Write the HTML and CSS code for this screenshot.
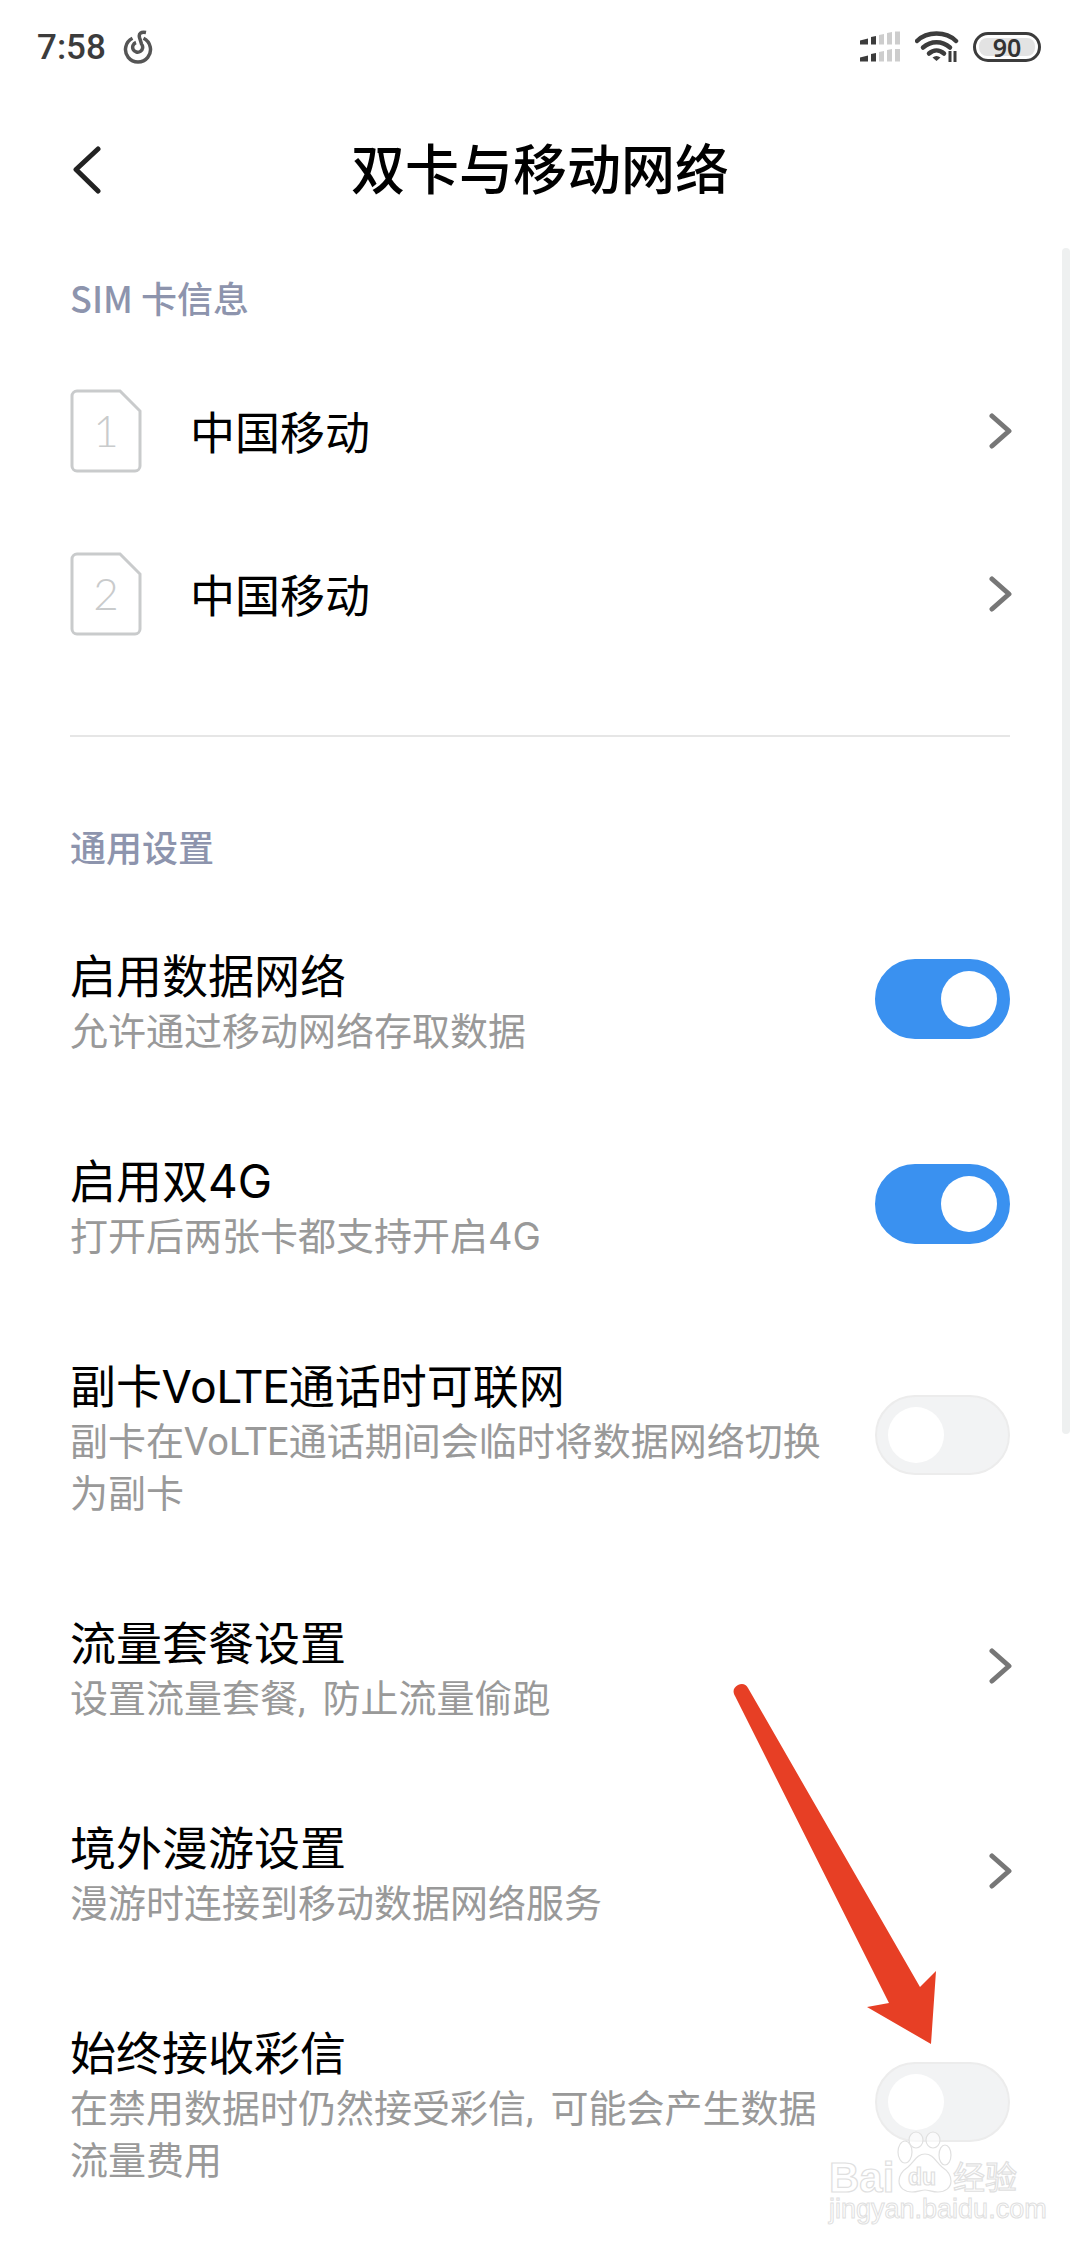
FILE: index.html
```html
<!DOCTYPE html>
<html lang="zh-CN">
<head>
    <meta charset="UTF-8">
    <meta name="viewport" content="width=device-width, initial-scale=1.0">
    <title>双卡与移动网络</title>
    <link rel="stylesheet" href="styles.css">
</head>
<body>
    <div class="status-bar">
        <div class="status-left">
            <span class="time">7:58</span>
            <svg class="music-icon" width="30" height="34" viewBox="0 0 30 34">
                <path d="M9.500 8.300A12.500 12.500 0 1 0 20.500 8.300" />
                <path d="M23 2.500C18 1.500 15.500 3.500 16.500 7.500L18.500 14A5 5 0 1 1 13 12.500" />
            </svg>
        </div>
        <div class="status-right">
            <svg class="signal-icon" width="40" height="32" viewBox="0 0 40 32">
                <path class="on" d="M0 9.500l8-2v6H0zM11 6l5-1v8.500h-5z" />
                <path class="off" d="M19 4l5-1v10.500h-5zM27 2l5-1v12.500h-5zM35 0.500h5V13.500h-5z" />
                <path class="on" d="M0 26.500l8-2v6H0zM11 23l5-1v8.500h-5z" />
                <path class="off" d="M19 21l5-1v10.500h-5zM27 19l5-1v12.500h-5zM35 18h5v12.500h-5z" />
            </svg>
            <svg class="wifi-icon" width="44" height="32" viewBox="0 0 44 32">
                <path d="M2 10C12 0 31 0 41 10" />
                <path d="M8 16.500C16 9.500 27 9.500 35 16.500" />
                <path d="M14 22.500C18.500 18.500 24.500 18.500 29 22.500" />
                <path class="wifi-dot" d="M17.500 26.500c2.500-2 5.500-2 8 0L21.500 30z" />
                <path class="wifi-arrows" d="M35 20v11M40 20v11" />
            </svg>
            <div class="battery"><span class="battery-level">90</span></div>
        </div>
    </div>

    <header class="title-bar">
        <svg class="back-icon" width="30" height="48" viewBox="0 0 30 48">
            <path d="M26 3L4 23.500 26 45" />
        </svg>
        <h1>双卡与移动网络</h1>
        <span></span>
    </header>

    <main>
        <h2 class="section-label sim-label">SIM 卡信息</h2>

        <div class="sim-row">
            <svg class="sim-icon" width="72" height="84" viewBox="0 0 72 84">
                <path d="M7 2h43l20 20v55a5 5 0 0 1-5 5H7a5 5 0 0 1-5-5V7a5 5 0 0 1 5-5z" />
                <text x="36" y="58" text-anchor="middle">1</text>
            </svg>
            <span class="sim-name">中国移动</span>
            <svg class="chevron" width="24" height="36" viewBox="0 0 24 36"><path d="M3 3l17 15L3 33" /></svg>
        </div>
        <div class="sim-row">
            <svg class="sim-icon" width="72" height="84" viewBox="0 0 72 84">
                <path d="M7 2h43l20 20v55a5 5 0 0 1-5 5H7a5 5 0 0 1-5-5V7a5 5 0 0 1 5-5z" />
                <text x="36" y="58" text-anchor="middle">2</text>
            </svg>
            <span class="sim-name">中国移动</span>
            <svg class="chevron" width="24" height="36" viewBox="0 0 24 36"><path d="M3 3l17 15L3 33" /></svg>
        </div>

        <hr class="divider">

        <h2 class="section-label">通用设置</h2>

        <div class="row">
            <div class="row-text">
                <div class="row-title">启用数据网络</div>
                <div class="row-sub">允许通过移动网络存取数据</div>
            </div>
            <div class="toggle on"><span class="knob"></span></div>
        </div>
        <div class="row">
            <div class="row-text">
                <div class="row-title">启用双<span class="digits">4G</span></div>
                <div class="row-sub">打开后两张卡都支持开启<span class="digits">4G</span></div>
            </div>
            <div class="toggle on"><span class="knob"></span></div>
        </div>
        <div class="row">
            <div class="row-text">
                <div class="row-title">副卡VoLTE通话时可联网</div>
                <div class="row-sub">副卡在VoLTE通话期间会临时将数据网络切换为副卡</div>
            </div>
            <div class="toggle"><span class="knob"></span></div>
        </div>
        <div class="row">
            <div class="row-text">
                <div class="row-title">流量套餐设置</div>
                <div class="row-sub">设置流量套餐<span class="comma">, </span>防止流量偷跑</div>
            </div>
            <svg class="chevron" width="24" height="36" viewBox="0 0 24 36"><path d="M3 3l17 15L3 33" /></svg>
        </div>
        <div class="row">
            <div class="row-text">
                <div class="row-title">境外漫游设置</div>
                <div class="row-sub">漫游时连接到移动数据网络服务</div>
            </div>
            <svg class="chevron" width="24" height="36" viewBox="0 0 24 36"><path d="M3 3l17 15L3 33" /></svg>
        </div>
        <div class="row">
            <div class="row-text">
                <div class="row-title">始终接收彩信</div>
                <div class="row-sub">在禁用数据时仍然接受彩信<span class="comma">, </span>可能会产生数据流量费用</div>
            </div>
            <div class="toggle"><span class="knob"></span></div>
        </div>
    </main>

    <div class="scrollbar"></div>

    <svg class="annotation" width="1080" height="2248" viewBox="0 0 1080 2248">
        <path class="arrow" d="M735 1696c-3-5-1-9 3-11s8-1 10 3L920 1987 936 1971 931 2044 867 2007 889 2003z" />
        <g class="watermark">
            <text class="wm-big" x="829" y="2192">Bai</text>
            <ellipse cx="905" cy="2152" rx="7" ry="11" />
            <ellipse cx="916" cy="2140" rx="7" ry="8" />
            <ellipse cx="933" cy="2140" rx="7" ry="8" />
            <ellipse cx="945" cy="2155" rx="6" ry="10" />
            <path d="M925 2154c-8 0-11 8-17 13-6 4-9 9-9 14 0 7 6 11 13 11 6 0 9-2 13-2s7 2 13 2c7 0 13-4 13-11 0-5-3-10-9-14-6-5-9-13-17-13z" />
            <text class="wm-du" x="908" y="2185">du</text>
            <text class="wm-cn" x="953" y="2189">经验</text>
            <text class="wm-url" x="829" y="2218">jingyan.baidu.com</text>
        </g>
    </svg>
</body>
</html>
```
FILE: styles.css
```css
* {
    box-sizing: border-box;
}

body {
    position: relative;
    width: 1080px;
    height: 2248px;
    margin: 0;
    overflow: hidden;
    background-color: #fff;
    color: #000;
    font-family: "Noto Sans CJK SC", "Noto Sans", sans-serif;
}

/* status bar */
.status-bar {
    display: flex;
    justify-content: space-between;
    align-items: center;
    height: 94px;
    padding: 0 39px 0 37px;
}

.status-left,
.status-right {
    display: flex;
    align-items: center;
}

.time {
    font-family: Roboto, sans-serif;
    font-size: 35px;
    font-weight: 500;
    color: #3c3c3c;
}

.music-icon {
    margin-left: 17px;
    fill: none;
    stroke: #555;
    stroke-width: 3.5;
}

.signal-icon .on {
    fill: #3c3c3c;
}

.signal-icon .off {
    fill: #cdcdcd;
}

.wifi-icon {
    margin-left: 15px;
    fill: none;
    stroke: #3c3c3c;
    stroke-width: 4.5;
    stroke-linecap: round;
}

.wifi-icon .wifi-dot {
    fill: #3c3c3c;
    stroke: none;
}

.wifi-icon .wifi-arrows {
    stroke-width: 3;
    stroke-linecap: butt;
}

.battery {
    display: flex;
    align-items: center;
    justify-content: center;
    width: 68px;
    height: 30px;
    margin-left: 14px;
    padding: 2px 3px;
    border: 3px solid #3c3c3c;
    border-radius: 15px;
}

.battery-level {
    width: 100%;
    height: 18px;
    background-color: #e3e3e3;
    border-radius: 8px;
    font-family: "Noto Sans", sans-serif;
    font-size: 25px;
    font-weight: 600;
    line-height: 18px;
    text-align: center;
    color: #333;
}

/* title */
.title-bar {
    display: grid;
    grid-template-columns: 1fr auto 1fr;
    align-items: center;
    height: 152px;
    padding: 0 72px;
}

.title-bar h1 {
    margin: 0 0 6px;
    font-size: 54px;
    font-weight: 500;
    line-height: 60px;
}

.back-icon {
    fill: none;
    stroke: #222;
    stroke-width: 5;
    stroke-linecap: round;
    stroke-linejoin: round;
}

/* list */
main {
    padding: 0 70px;
}

.section-label {
    margin: 0;
    font-size: 36px;
    font-weight: 500;
    line-height: 50px;
    color: #8d94ad;
}

.sim-label {
    margin-top: 26px;
    margin-bottom: 27px;
}

.sim-row {
    display: flex;
    align-items: center;
    height: 163px;
}

.sim-icon {
    fill: none;
    stroke: #c9cbcc;
    stroke-width: 3;
}

.sim-icon text {
    fill: #c9cbcc;
    stroke: none;
    font-family: Lato, sans-serif;
    font-size: 44px;
    font-weight: 300;
}

.sim-name {
    flex: 1;
    margin-left: 48px;
    font-size: 45px;
}

.chevron {
    flex: none;
    margin-right: -3px;
    fill: none;
    stroke: #777;
    stroke-width: 5;
    stroke-linecap: round;
    stroke-linejoin: round;
}

.divider {
    height: 2px;
    margin: 60px 0 84px;
    border: none;
    background-color: #e6e6e6;
}

.row {
    display: flex;
    justify-content: space-between;
    align-items: center;
    padding: 45px 0 50px;
}

.section-label + .row {
    margin-top: 28px;
}

.row-text {
    width: 770px;
    margin-bottom: -4px;
    padding-top: 4px;
    font-family: Roboto, "Noto Sans CJK SC", sans-serif;
}

.row-title {
    font-size: 46px;
    line-height: 58px;
}

.row-sub {
    font-size: 38px;
    line-height: 52px;
    color: #999;
}

.digits {
    font-family: Inter, sans-serif;
    line-height: 0;
}

.comma {
    letter-spacing: 0.1em;
}

/* switches */
.toggle {
    display: flex;
    align-items: center;
    flex: none;
    width: 135px;
    height: 80px;
    padding: 0 11px;
    background-color: #f2f3f4;
    border: 2px solid #ececec;
    border-radius: 40px;
}

.toggle.on {
    justify-content: flex-end;
    background-color: #3a91f0;
    border-color: #3a91f0;
}

.knob {
    width: 56px;
    height: 56px;
    background-color: #fff;
    border-radius: 50%;
}

.scrollbar {
    position: absolute;
    top: 248px;
    left: 1062px;
    width: 8px;
    height: 1186px;
    background-color: #eef0f0;
    border-radius: 4px;
}

/* red arrow and watermark sit on top of the screen */
.annotation {
    position: absolute;
    top: 0;
    left: 0;
}

.arrow {
    fill: #e73f25;
}

.watermark {
    fill: #fff;
    fill-opacity: 0.6;
    stroke: #e0e0e0;
    stroke-width: 1.2;
}

.watermark text {
    font-family: "Liberation Sans", sans-serif;
}

.wm-big {
    font-size: 42px;
    font-weight: 700;
}

.wm-du {
    font-size: 23px;
    font-weight: 700;
}

.watermark .wm-cn {
    font-family: "Noto Sans CJK SC", sans-serif;
    font-size: 32px;
}

.wm-url {
    font-size: 27px;
    stroke-width: 1;
}
```
